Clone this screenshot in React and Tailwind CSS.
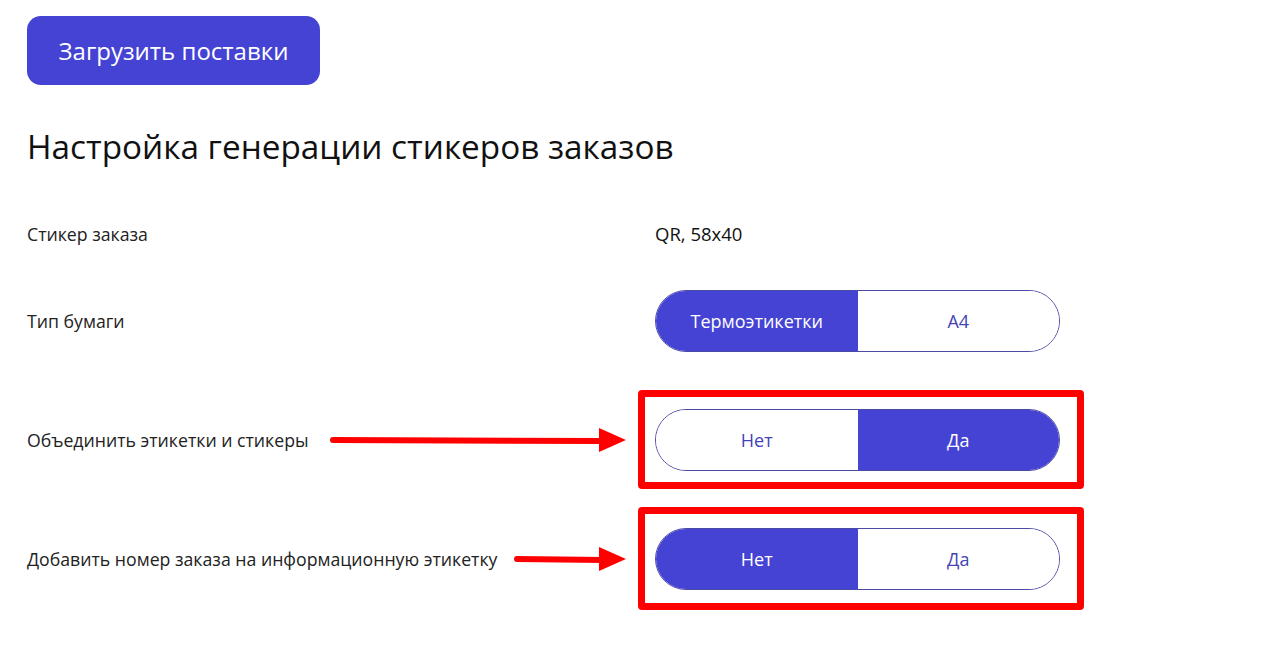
import React from 'react';

const font = { fontFamily: '"Open Sans", "Noto Sans", sans-serif' };

const Arrow = ({ left, width }) => (
  <svg
    className="absolute top-1/2 -translate-y-1/2"
    style={{ left, width }}
    height="26"
    viewBox={`0 0 ${width} 26`}
  >
    <line x1="3" y1="13" x2={width - 22} y2="14" stroke="#ff0000" strokeWidth="6" strokeLinecap="round" />
    <polygon points={`${width - 27},1 ${width},13 ${width - 27},25`} fill="#ff0000" />
  </svg>
);

const Toggle = ({ left, right, active }) => (
  <div className="flex h-[62px] w-[405px] overflow-hidden rounded-full border border-[#4b4aa6] text-[18px]">
    <div
      className={`flex w-1/2 items-center justify-center ${
        active === 0 ? 'bg-[#4543d3] font-medium text-white' : 'bg-white text-[#4543b8]'
      }`}
    >
      {left}
    </div>
    <div
      className={`flex w-1/2 items-center justify-center ${
        active === 1 ? 'bg-[#4543d3] font-medium text-white' : 'bg-white text-[#4543b8]'
      }`}
    >
      {right}
    </div>
  </div>
);

// red annotation frame drawn over the control
const Highlight = ({ children, tall }) => (
  <div className="relative">
    {children}
    <div
      className={`pointer-events-none absolute -left-[17px] -right-[24px] rounded-[4px] border-[7px] border-[#ff0000] ${
        tall ? '-top-[21px] -bottom-[20px]' : '-top-[19px] -bottom-[18px]'
      }`}
    />
  </div>
);

export default function App() {
  return (
    <div className="min-h-screen bg-white pl-[27px] pt-[16px] text-[#222]" style={font}>
      <button
        type="button"
        className="flex h-[69px] w-[293px] items-center justify-center rounded-[14px] bg-[#4543d3] text-[24px] text-white"
      >
        Загрузить поставки
      </button>

      <h1 className="mt-[41px] text-[33.3px] leading-[40px] text-[#111]">
        Настройка генерации стикеров заказов
      </h1>

      <div className="mt-[56px] flex flex-col">
        <div className="flex h-[24px] items-center">
          <div className="w-[628px] text-[17.7px]">Стикер заказа</div>
          <div className="text-[18.5px] font-medium text-[#111]">QR, 58x40</div>
        </div>

        <div className="mt-[44px] flex items-center">
          <div className="w-[628px] text-[17.7px]">Тип бумаги</div>
          <Toggle left="Термоэтикетки" right="A4" active={0} />
        </div>

        <div className="mt-[57px] flex items-center">
          <div className="relative flex h-[62px] w-[628px] items-center text-[17.7px]">
            Объединить этикетки и стикеры
            <Arrow left={303} width={296} />
          </div>
          <Highlight>
            <Toggle left="Нет" right="Да" active={1} />
          </Highlight>
        </div>

        <div className="mt-[57px] flex items-center">
          <div className="relative flex h-[62px] w-[628px] items-center text-[17.7px]">
            Добавить номер заказа на информационную этикетку
            <Arrow left={487} width={112} />
          </div>
          <Highlight tall>
            <Toggle left="Нет" right="Да" active={0} />
          </Highlight>
        </div>
      </div>
    </div>
  );
}
